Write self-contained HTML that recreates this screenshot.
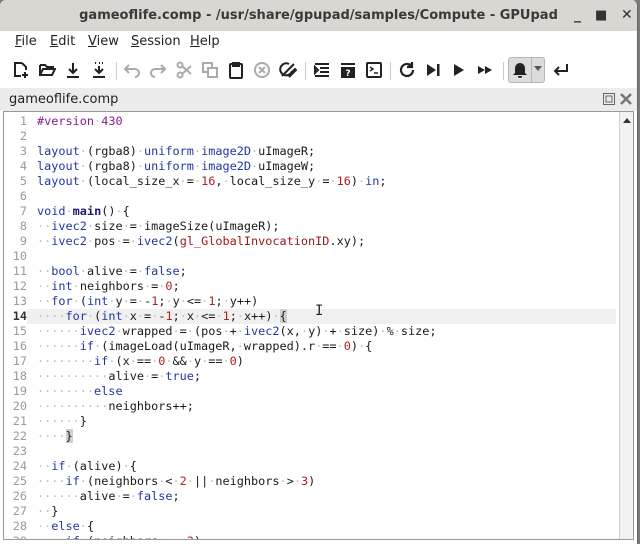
<!DOCTYPE html><html><head><style>
*{margin:0;padding:0;box-sizing:border-box}
body{width:640px;height:544px;background:#7a7a7a;position:relative;overflow:hidden;font-family:"Liberation Sans","DejaVu Sans",sans-serif}
.win{position:absolute;left:0;top:0;width:638px;height:544px;background:#fff;border-radius:6px 6px 0 0;overflow:hidden;border-right:1px solid #666}
.title{position:absolute;left:0;top:0;width:100%;height:31px;background:#dad6d2;text-align:center;font:bold 13px "DejaVu Sans",sans-serif;color:#3a3a3a;line-height:31px}
.wc{position:absolute;top:0;font:bold 14px "DejaVu Sans",sans-serif;color:#333;line-height:31px}
.menu{position:absolute;top:31px;left:0;width:100%;height:22px;font:13px "DejaVu Sans",sans-serif;color:#222}
.menu span{position:absolute;top:3px}
.menu u{text-decoration:underline}
.tb{position:absolute;top:56px;height:28px;width:100%}
.tb svg{position:absolute;top:5px}
.sep{position:absolute;top:6px;width:1px;height:18px;background:#ccc}
.tabbar{position:absolute;top:88px;left:0;width:100%;height:23px;background:#ececec;font:13px "DejaVu Sans",sans-serif;color:#222}
.ed{position:absolute;top:111px;left:3px;width:631px;height:429px;border:1px solid #9a9a9a;background:#fff;overflow:hidden}
.sb{position:absolute;right:0;top:0;width:14px;height:100%;background:#f2f2f2;border-left:1px solid #cfcfcf}
.code{position:absolute;left:0;top:2px;font:11.85px "DejaVu Sans Mono",monospace;line-height:15px;white-space:pre;color:#1a1a1a}
.ln{display:inline-block;width:23px;text-align:right;color:#9a9a9a;margin-right:10px}
.cur{background:#f0f0f0;width:612px}
.cur .ln{color:#333;font-weight:bold;background:#fff}
.d{color:#bdbdbd}.k{color:#2235a8}.n{color:#b02020}.p{color:#8a1c8a}.b{color:#1a1a70;font-weight:bold}.g{color:#a01818}
.m{background:#cfcfcf}
</style></head><body><div class="win">
<div class="title">gameoflife.comp - /usr/share/gpupad/samples/Compute - GPUpad</div>
<div class="wc" style="left:574px">_</div><div class="wc" style="left:595px;font-size:13px">■</div><div class="wc" style="left:621px">✕</div>
<div class="menu"><span style="left:15px"><u>F</u>ile</span><span style="left:50px"><u>E</u>dit</span><span style="left:88px"><u>V</u>iew</span><span style="left:131px"><u>S</u>ession</span><span style="left:190px"><u>H</u>elp</span></div>
<div class="tb">
<svg style="left:12px" width="18" height="18" viewBox="0 0 18 18" fill="none" stroke="#222" stroke-width="2"><path d="M10 2H3v13h6M10 2l4 4v3"/><path d="M13 11v6M10 14h6"/></svg>
<svg style="left:38px" width="18" height="18" viewBox="0 0 18 18" fill="none" stroke="#222" stroke-width="2"><path d="M2 4h5l2 2h6v2M2 4v10h12l3-6H5l-3 6"/></svg>
<svg style="left:64px" width="18" height="18" viewBox="0 0 18 18" fill="none" stroke="#222" stroke-width="2"><path d="M9 2v10M5 8l4 4 4-4M3 16h12"/></svg>
<svg style="left:90px" width="18" height="18" viewBox="0 0 18 18" fill="none" stroke="#222" stroke-width="2"><path d="M9 5v7M5 8l4 4 4-4M3 16h12M5 2h1M9 2h1M12 2h1"/></svg>
<div class="sep" style="left:116px"></div>
<svg style="left:123px" width="18" height="18" viewBox="0 0 18 18" fill="none" stroke="#aaa" stroke-width="2"><path d="M6 4L2 8l4 4M2 8h10a4 4 0 010 8"/></svg>
<svg style="left:149px" width="18" height="18" viewBox="0 0 18 18" fill="none" stroke="#aaa" stroke-width="2"><path d="M12 4l4 4-4 4M16 8H6a4 4 0 000 8"/></svg>
<svg style="left:175px" width="18" height="18" viewBox="0 0 18 18" fill="none" stroke="#aaa" stroke-width="2"><circle cx="5" cy="4" r="2.5"/><circle cx="5" cy="14" r="2.5"/><path d="M7 5l9 8M7 13l9-8"/></svg>
<svg style="left:201px" width="18" height="18" viewBox="0 0 18 18" fill="none" stroke="#aaa" stroke-width="2"><rect x="2" y="2" width="9" height="9"/><rect x="7" y="7" width="9" height="9" fill="#fff"/></svg>
<svg style="left:227px" width="18" height="18" viewBox="0 0 18 18" fill="none" stroke="#222" stroke-width="2"><rect x="3" y="3" width="12" height="14" rx="1"/><path d="M6 2h6v3H6z" fill="#222"/></svg>
<svg style="left:253px" width="18" height="18" viewBox="0 0 18 18" fill="none" stroke="#aaa" stroke-width="2"><circle cx="9" cy="9" r="7"/><path d="M6 6l6 6M12 6l-6 6"/></svg>
<svg style="left:279px" width="18" height="18" viewBox="0 0 18 18" fill="none" stroke="#222" stroke-width="2"><path d="M13 10A6 6 0 1110 3M3 15l12-12M9 15l7-7 1 1-7 7"/></svg>
<div class="sep" style="left:305px"></div>
<svg style="left:313px" width="18" height="18" viewBox="0 0 18 18" fill="none" stroke="#222" stroke-width="2"><path d="M2 3h14M7 7h9M7 11h9M2 15h14M2 6v6l3-3z"/></svg>
<svg style="left:339px" width="18" height="18" viewBox="0 0 18 18"><path d="M2 2h14v2H2z M2 6h14v11H2z" fill="#222"/><text x="9" y="15" font-size="9" font-weight="bold" fill="#fff" text-anchor="middle" font-family="DejaVu Sans">?</text></svg>
<svg style="left:365px" width="18" height="18" viewBox="0 0 18 18" fill="none" stroke="#222" stroke-width="2"><rect x="2" y="2" width="14" height="14" rx="1"/><path d="M5 6l3 2-3 2M9 12h4" stroke-width="1.5"/></svg>
<div class="sep" style="left:390px"></div>
<svg style="left:398px" width="18" height="18" viewBox="0 0 18 18" fill="none" stroke="#222" stroke-width="2.2"><path d="M15 9a6 6 0 11-2-4.5"/><path d="M14 1v5h-5" fill="#222"/></svg>
<svg style="left:424px" width="18" height="18" viewBox="0 0 18 18" fill="#222"><path d="M3 3l9 6-9 6z"/><rect x="13" y="3" width="2.5" height="12"/></svg>
<svg style="left:450px" width="18" height="18" viewBox="0 0 18 18" fill="#222"><path d="M4 3l10 6-10 6z"/></svg>
<svg style="left:476px" width="18" height="18" viewBox="0 0 18 18" fill="#222"><path d="M2 5l7 4-7 4zM9 5l7 4-7 4z"/></svg>
<div class="sep" style="left:503px"></div>
<div style="position:absolute;left:508px;top:1px;width:37px;height:26px;background:#dcdcdc;border:1px solid #b5b5b5;border-radius:3px"></div>
<div style="position:absolute;left:531px;top:2px;width:1px;height:24px;background:#b5b5b5"></div>
<svg style="left:511px" width="18" height="18" viewBox="0 0 18 18" fill="#222"><path d="M9 2a5 5 0 015 5v5l2 2H2l2-2V7a5 5 0 015-5zM7 15h4a2 2 0 01-4 0z"/></svg>
<svg style="left:534px;top:10px" width="8" height="6" viewBox="0 0 8 6" fill="#555"><path d="M0 0h8L4 5z"/></svg>
<svg style="left:552px" width="18" height="18" viewBox="0 0 18 18" fill="none" stroke="#222" stroke-width="2"><path d="M15 3v7H3M7 6l-4 4 4 4"/></svg>
</div>
<div class="tabbar"><span style="position:absolute;left:9px;top:4px">gameoflife.comp</span>
<svg style="position:absolute;left:603px;top:5px" width="12" height="12" viewBox="0 0 12 12" fill="none" stroke="#666"><rect x="0.5" y="0.5" width="11" height="11"/><rect x="3" y="3" width="6" height="6"/></svg>
<svg style="position:absolute;left:620px;top:5px" width="12" height="12" viewBox="0 0 12 12" fill="none" stroke="#777" stroke-width="2.5"><path d="M1 1l10 10M11 1L1 11"/></svg></div>
<div class="ed"><div class="sb"><svg style="position:absolute;left:3px;top:6px" width="8" height="5" viewBox="0 0 8 5" fill="#333"><path d="M0 5h8L4 0z"/></svg></div>
<div class="code"><div><span class="ln">1</span><span class="p">#version<span class="d">·</span>430</span></div><div><span class="ln">2</span></div><div><span class="ln">3</span><span class="k">layout</span><span class="d">·</span>(rgba8)<span class="d">·</span><span class="k">uniform</span><span class="d">·</span><span class="k">image2D</span><span class="d">·</span>uImageR;</div><div><span class="ln">4</span><span class="k">layout</span><span class="d">·</span>(rgba8)<span class="d">·</span><span class="k">uniform</span><span class="d">·</span><span class="k">image2D</span><span class="d">·</span>uImageW;</div><div><span class="ln">5</span><span class="k">layout</span><span class="d">·</span>(local_size_x<span class="d">·</span>=<span class="d">·</span><span class="n">16</span>,<span class="d">·</span>local_size_y<span class="d">·</span>=<span class="d">·</span><span class="n">16</span>)<span class="d">·</span><span class="k">in</span>;</div><div><span class="ln">6</span></div><div><span class="ln">7</span><span class="k">void</span><span class="d">·</span><span class="b">main</span>()<span class="d">·</span>{</div><div><span class="ln">8</span><span class="d">··</span><span class="k">ivec2</span><span class="d">·</span>size<span class="d">·</span>=<span class="d">·</span>imageSize(uImageR);</div><div><span class="ln">9</span><span class="d">··</span><span class="k">ivec2</span><span class="d">·</span>pos<span class="d">·</span>=<span class="d">·</span><span class="k">ivec2</span>(<span class="g">gl_GlobalInvocationID</span>.xy);</div><div><span class="ln">10</span></div><div><span class="ln">11</span><span class="d">··</span><span class="k">bool</span><span class="d">·</span>alive<span class="d">·</span>=<span class="d">·</span><span class="k">false</span>;</div><div><span class="ln">12</span><span class="d">··</span><span class="k">int</span><span class="d">·</span>neighbors<span class="d">·</span>=<span class="d">·</span><span class="n">0</span>;</div><div><span class="ln">13</span><span class="d">··</span><span class="k">for</span><span class="d">·</span>(<span class="k">int</span><span class="d">·</span>y<span class="d">·</span>=<span class="d">·</span>-<span class="n">1</span>;<span class="d">·</span>y<span class="d">·</span>&lt;=<span class="d">·</span><span class="n">1</span>;<span class="d">·</span>y++)</div><div class="cur"><span class="ln">14</span><span class="d">····</span><span class="k">for</span><span class="d">·</span>(<span class="k">int</span><span class="d">·</span>x<span class="d">·</span>=<span class="d">·</span>-<span class="n">1</span>;<span class="d">·</span>x<span class="d">·</span>&lt;=<span class="d">·</span><span class="n">1</span>;<span class="d">·</span>x++)<span class="d">·</span><span class="m">{</span></div><div><span class="ln">15</span><span class="d">······</span><span class="k">ivec2</span><span class="d">·</span>wrapped<span class="d">·</span>=<span class="d">·</span>(pos<span class="d">·</span>+<span class="d">·</span><span class="k">ivec2</span>(x,<span class="d">·</span>y)<span class="d">·</span>+<span class="d">·</span>size)<span class="d">·</span>%<span class="d">·</span>size;</div><div><span class="ln">16</span><span class="d">······</span><span class="k">if</span><span class="d">·</span>(imageLoad(uImageR,<span class="d">·</span>wrapped).r<span class="d">·</span>==<span class="d">·</span><span class="n">0</span>)<span class="d">·</span>{</div><div><span class="ln">17</span><span class="d">········</span><span class="k">if</span><span class="d">·</span>(x<span class="d">·</span>==<span class="d">·</span><span class="n">0</span><span class="d">·</span>&amp;&amp;<span class="d">·</span>y<span class="d">·</span>==<span class="d">·</span><span class="n">0</span>)</div><div><span class="ln">18</span><span class="d">··········</span>alive<span class="d">·</span>=<span class="d">·</span><span class="k">true</span>;</div><div><span class="ln">19</span><span class="d">········</span><span class="k">else</span></div><div><span class="ln">20</span><span class="d">··········</span>neighbors++;</div><div><span class="ln">21</span><span class="d">······</span>}</div><div><span class="ln">22</span><span class="d">····</span><span class="m">}</span></div><div><span class="ln">23</span></div><div><span class="ln">24</span><span class="d">··</span><span class="k">if</span><span class="d">·</span>(alive)<span class="d">·</span>{</div><div><span class="ln">25</span><span class="d">····</span><span class="k">if</span><span class="d">·</span>(neighbors<span class="d">·</span>&lt;<span class="d">·</span><span class="n">2</span><span class="d">·</span>||<span class="d">·</span>neighbors<span class="d">·</span>&gt;<span class="d">·</span><span class="n">3</span>)</div><div><span class="ln">26</span><span class="d">······</span>alive<span class="d">·</span>=<span class="d">·</span><span class="k">false</span>;</div><div><span class="ln">27</span><span class="d">··</span>}</div><div><span class="ln">28</span><span class="d">··</span><span class="k">else</span><span class="d">·</span>{</div><div><span class="ln">29</span><span class="d">····</span><span class="k">if</span><span class="d">·</span>(neighbors<span class="d">·</span>==<span class="d">·</span><span class="n">3</span>)</div></div>
<div style="position:absolute;left:311px;top:191px;font:14px 'DejaVu Sans Mono',monospace;color:#222">I</div>
</div></div></body></html>
